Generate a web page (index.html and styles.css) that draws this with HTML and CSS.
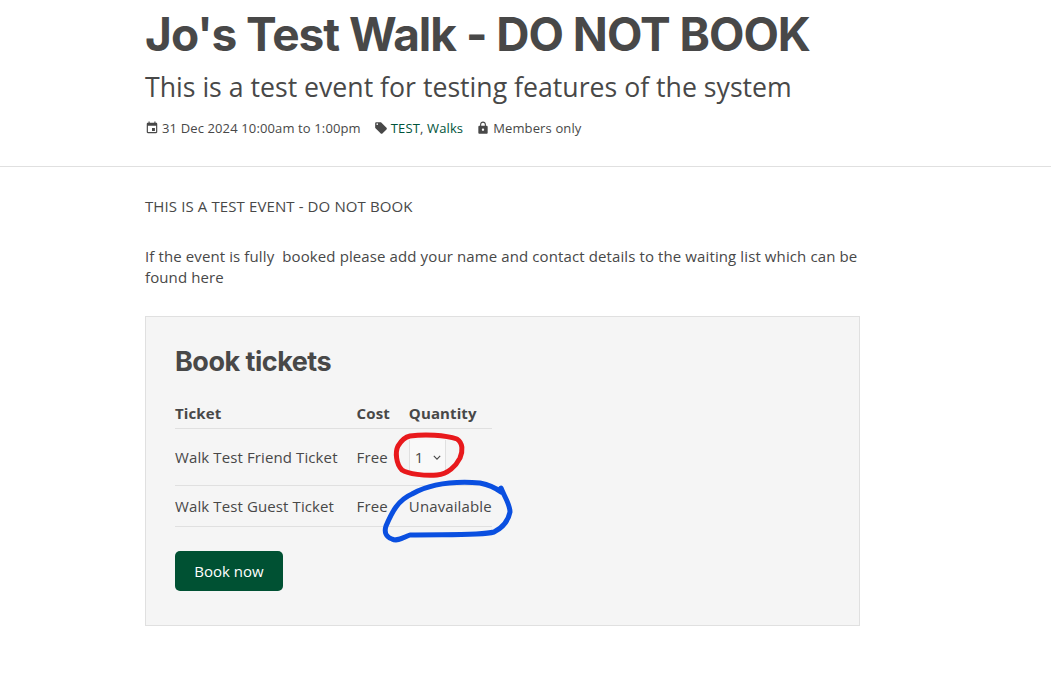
FILE: index.html
```
<!DOCTYPE html>
<html lang="en">
<head>
<meta charset="utf-8">
<title>Jo's Test Walk</title>
<link rel="stylesheet" href="styles.css">
</head>
<body>
<header class="event-header">
  <div class="wrap">
    <h1>Jo's Test Walk - DO NOT BOOK</h1>
    <p class="subtitle">This is a test event for testing features of the system</p>
    <ul class="meta">
      <li>
        <svg class="ico" viewBox="0 0 24 24"><path d="M17 12h-5v5h5v-5zM16 1v2H8V1H6v2H5c-1.110 0-1.990.9-1.990 2L3 19c0 1.100.89 2 2 2h14c1.100 0 2-.9 2-2V5c0-1.100-.9-2-2-2h-1V1h-2zm3 18H5V8h14v11z"/></svg>
        <span>31 Dec 2024 10:00am to 1:00pm</span>
      </li>
      <li>
        <svg class="ico" viewBox="0 0 24 24"><path d="M21.410 11.580l-9-9C12.050 2.220 11.550 2 11 2H4c-1.100 0-2 .9-2 2v7c0 .55.22 1.050.59 1.420l9 9c.36.36.86.58 1.410.58.55 0 1.050-.22 1.410-.59l7-7c.37-.36.59-.86.59-1.410 0-.55-.23-1.060-.59-1.420zM5.500 7C4.670 7 4 6.330 4 5.500S4.670 4 5.500 4 7 4.670 7 5.500 6.330 7 5.500 7z"/></svg>
        <span><a href="#">TEST</a>, <a href="#">Walks</a></span>
      </li>
      <li>
        <svg class="ico" viewBox="0 0 24 24"><path d="M18 8h-1V6c0-2.760-2.240-5-5-5S7 3.240 7 6v2H6c-1.100 0-2 .9-2 2v10c0 1.100.9 2 2 2h12c1.100 0 2-.9 2-2V10c0-1.100-.9-2-2-2zm-6 9c-1.100 0-2-.9-2-2s.9-2 2-2 2 .9 2 2-.9 2-2 2zm3.100-9H8.900V6c0-1.710 1.390-3.100 3.100-3.100 1.710 0 3.100 1.390 3.100 3.100v2z"/></svg>
        <span>Members only</span>
      </li>
    </ul>
  </div>
</header>
<main class="wrap content">
  <p class="para">THIS IS A TEST EVENT - DO NOT BOOK</p>
  <p class="para para-last">If the event is fully&nbsp; booked please add your name and contact details to the waiting list which can be found here</p>
  <section class="booking">
    <h2>Book tickets</h2>
    <table class="tickets">
      <thead>
        <tr><th>Ticket</th><th>Cost</th><th class="last">Quantity</th></tr>
      </thead>
      <tbody>
        <tr class="row-select">
          <td>Walk Test Friend Ticket</td><td>Free</td>
          <td class="last"><span class="select">1<svg class="chev" viewBox="0 0 10 6"><path d="M1 1l4 4 4-4"/></svg></span></td>
        </tr>
        <tr class="row-plain">
          <td>Walk Test Guest Ticket</td><td>Free</td><td class="last">Unavailable</td>
        </tr>
      </tbody>
    </table>
    <button class="btn" type="button">Book now</button>
  </section>
</main>
<svg class="scribble" viewBox="0 0 1051 694" aria-hidden="true">
  <path class="red" d="M410 436C425 434 445 435 457 439C463 443 463 451 460 458C456 466 448 474 437 475C425 476 408 474 402 470C396 464 395 452 398 446C401 441 405 437 410 436Z"/>
  <path class="blue" d="M501 488C504 496 510 504 510 512C508 522 502 528 494 532C480 536 440 534 410 535C404 537 398 542 392 539C386 537 384 532 386 526C392 512 398 500 412 494C430 484 455 481 480 483C490 485 497 489 501 492"/>
</svg>
</body>
</html>
```
FILE: styles.css
```
* { box-sizing: border-box; }
html, body { margin: 0; padding: 0; }
body {
  position: relative;
  height: 694px;
  overflow: hidden;
  background: #fff;
  color: #484848;
  font-family: "Open Sans", sans-serif;
  font-size: 15px;
  line-height: 21px;
  letter-spacing: .11px;
}
.wrap { padding-left: 145px; }
.event-header { height: 167px; border-bottom: 1px solid #e0e0e0; }
h1 {
  margin: 0;
  padding-top: 8px;
  font-family: Inter, sans-serif;
  font-size: 46px;
  font-weight: 700;
  line-height: 52px;
  letter-spacing: -1px;
  white-space: nowrap;
}
.subtitle { margin: 9px 0 0; font-size: 26.670px; line-height: 36px; letter-spacing: 0; }
.meta {
  display: flex;
  gap: 13px;
  list-style: none;
  margin: 14px 0 0;
  padding: 0;
  font-size: 13px;
  line-height: 18px;
  letter-spacing: .13px;
}
.meta li { display: flex; align-items: center; gap: 3px; }
.meta a { color: #00533a; text-decoration: none; }
.ico { width: 14px; height: 14px; fill: #484848; }
.content { width: 860px; padding-top: 29px; }
.para { margin: 0 0 29px; }
.para-last { margin-bottom: 28px; }
.booking {
  width: 715px;
  height: 310px;
  padding: 29px;
  background: #f5f5f5;
  border: 1px solid #e0e0e0;
}
h2 {
  margin: 0;
  font-family: Inter, sans-serif;
  font-size: 27px;
  font-weight: 700;
  line-height: 32px;
  letter-spacing: -.5px;
}
.tickets { margin-top: 20px; border-collapse: collapse; }
.tickets th { text-align: left; font-weight: 700; height: 30px; padding: 2px 19px 0 0; }
.tickets td { padding: 1px 19px 0 0; }
.tickets tr { border-bottom: 1px solid #e0e0e0; }
.tickets .last { padding-right: 0; }
.row-select td { height: 57px; }
.row-plain td { height: 41px; }
.select {
  display: inline-flex;
  align-items: center;
  gap: 9px;
  width: 37px;
  height: 34px;
  padding-left: 5px;
  background: #f9f9f9;
  border-left: 1px solid #e0e0e0;
  border-right: 1px solid #e0e0e0;
  vertical-align: middle;
}
.chev { width: 8px; height: 5px; fill: none; stroke: #484848; stroke-width: 1.400; }
.btn {
  display: block;
  width: 108px;
  height: 40px;
  margin-top: 24px;
  border: 0;
  border-radius: 5px;
  background: #005133;
  color: #fff;
  font: 15px "Open Sans", sans-serif;
}
.scribble { position: absolute; left: 0; top: 0; width: 1051px; height: 694px; pointer-events: none; fill: none; }
.red { stroke: #e8191c; stroke-width: 5; stroke-linejoin: round; stroke-linecap: round; }
.blue { stroke: #0a4fe0; stroke-width: 5; stroke-linejoin: round; stroke-linecap: round; }
```
